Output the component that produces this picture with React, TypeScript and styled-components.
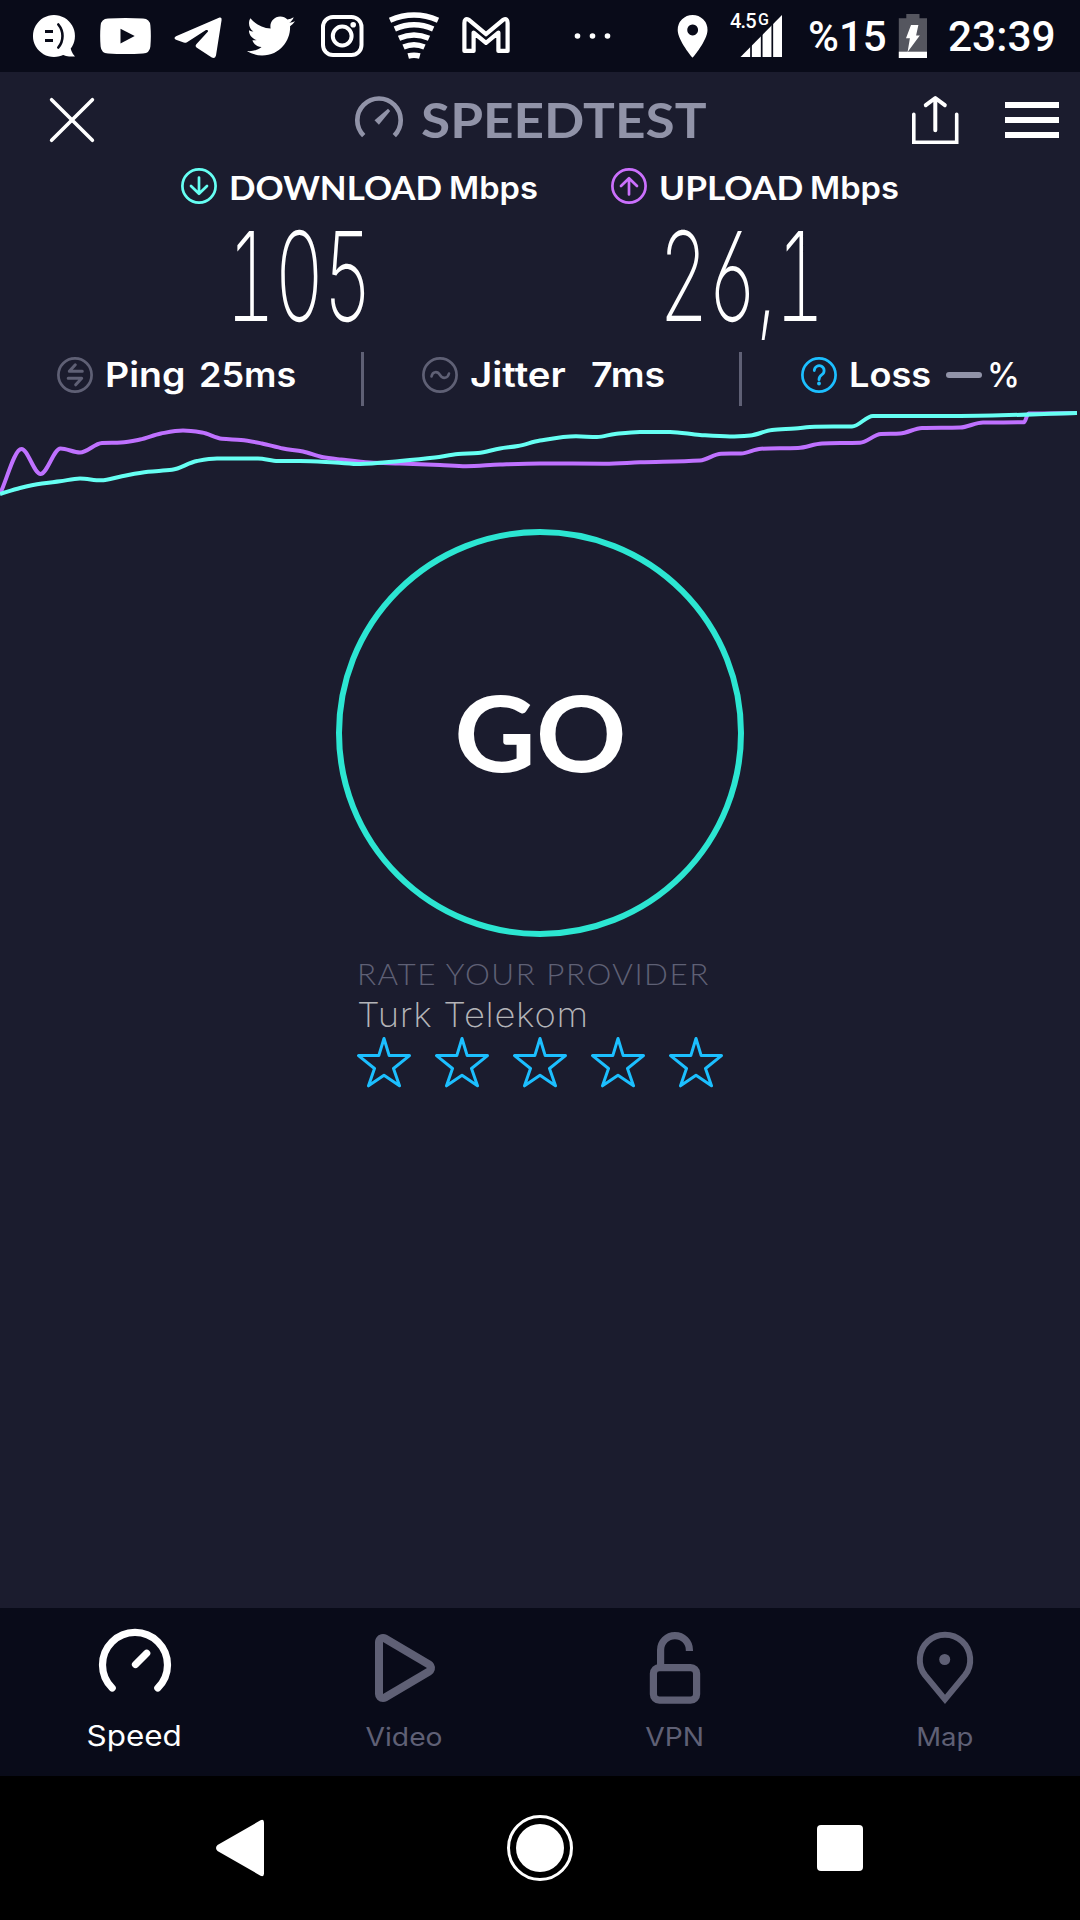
import React from "react";
import styled, { createGlobalStyle } from "styled-components";
import { FaTwitter } from "react-icons/fa";

const color = {
  page: "#1b1c2e",
  bar: "#090b19",
  white: "#ffffff",
  muted: "#9193a8",
  dim: "#5f6075",
  cyan: "#66fff3",
  teal: "#2ce6d2",
  violet: "#bf71ff",
  blue: "#1cbfff",
};

const GlobalStyle = createGlobalStyle`
  * { box-sizing: border-box; }
  body { margin: 0; background: ${color.page}; }
  svg { display: block; flex: none; }
`;

const Screen = styled.div`
  width: 1080px;
  height: 1920px;
  display: flex;
  flex-direction: column;
  background: ${color.page};
  color: ${color.white};
  font-family: Inter, "Liberation Sans", sans-serif;
  overflow: hidden;
`;

/* One piece of text: $w is the room it takes, $sx widens or condenses its letters. */
const Word = styled.span<{
  $size: number;
  $w: number;
  $sx?: number;
  $ml?: number;
  $weight?: number;
  $track?: number;
  $lh?: number;
  $face?: "Inter" | "Lato" | "Roboto";
  $tone?: string;
}>`
  display: block;
  flex: none;
  width: ${(p) => p.$w}px;
  margin-left: ${(p) => p.$ml ?? 0}px;
  font-family: ${(p) => p.$face ?? "Inter"}, "Liberation Sans", sans-serif;
  font-size: ${(p) => p.$size}px;
  font-weight: ${(p) => p.$weight ?? 600};
  line-height: ${(p) => p.$lh ?? 36}px;
  letter-spacing: ${(p) => p.$track ?? 0}px;
  color: ${(p) => p.$tone ?? color.white};
  white-space: nowrap;
  transform: scaleX(${(p) => p.$sx ?? 1});
  transform-origin: 0 50%;
`;

const Glyph = styled.svg<{ $w: number; $h: number; $ml?: number }>`
  width: ${(p) => p.$w}px;
  height: ${(p) => p.$h}px;
  margin-left: ${(p) => p.$ml ?? 0}px;
  fill: none;
  stroke-linecap: round;
  stroke-linejoin: round;
`;

/* ---------- status bar ---------- */

const StatusBar = styled.header`
  height: 72px;
  flex: none;
  display: flex;
  align-items: flex-start;
  padding: 12px 0 0 32px;
  background: ${color.bar};
`;

const Bird = styled(FaTwitter)`
  width: 48px;
  height: 48px;
  margin-left: 24px;
`;

const Network = styled.div`
  width: 54px;
  height: 48px;
  margin-left: 21px;
  position: relative;
`;

const NetworkType = styled.span`
  position: absolute;
  left: 0;
  top: -1px;
  font: 500 20px/20px Roboto, sans-serif;
  letter-spacing: -0.8px;
  white-space: nowrap;
  sup {
    font-size: 16px;
    line-height: 0;
    vertical-align: 3px;
    margin-left: 2px;
  }
`;

function Status() {
  return (
    <StatusBar>
      <Glyph $w={44} $h={48} viewBox="32 12 44 48">
        <path d="M54 15a21 21 0 1 1-.1 0zM70 44q.5 8 5 12.500-9 .5-14-2.500z" fill="#fff" />
        <path d="M45 31.500h8M45 40.500h8" stroke={color.bar} strokeWidth="3" strokeLinecap="butt" />
        <path d="M58.300 24.500q4.200 5 4.200 11.500t-4.200 11.500" stroke={color.bar} strokeWidth="2.600" />
      </Glyph>
      <Glyph $w={52} $h={48} $ml={24} viewBox="100 12 52 48">
        <path
          d="M108 18.600q17.500-1.200 35 0 6.800.4 7.400 7 .9 10.400 0 20.800-.6 6.600-7.400 7-17.500 1.200-35 0-6.800-.4-7.400-7-.9-10.400 0-20.800.6-6.600 7.400-7z"
          fill="#fff"
        />
        <path d="M120.500 28.800v14.600l14.200-7.300z" fill={color.bar} />
      </Glyph>
      <Glyph $w={50} $h={48} $ml={21} viewBox="173 12 50 48">
        <path
          d="M176 36.200L219.500 17.600Q222 16.800 221.600 20L216 55.500Q215 59 211.800 57.600L196.500 47.600Q194.600 46 196.300 44.200L208 31.400Q208.300 29.600 206 30L187 42.200Q185.500 43 183.700 42.600L176 39.800Q173 38 176 36.200Z"
          fill="#fff"
        />
      </Glyph>
      <Bird />
      <Glyph $w={44} $h={48} $ml={25} viewBox="320 12 44 48">
        <rect x="323" y="17" width="38.500" height="38" rx="10" stroke="#fff" strokeWidth="4" />
        <circle cx="342.200" cy="36" r="9.400" stroke="#fff" strokeWidth="4" />
        <circle cx="353.200" cy="24.800" r="2.800" fill="#fff" />
      </Glyph>
      <Glyph $w={52} $h={48} $ml={24} viewBox="388 12 52 48" stroke="#fff" strokeWidth="5.500">
        <g strokeLinecap="butt">
          <path d="M390 20.200Q414 9.800 438 20.200" />
          <path d="M394.800 29Q414 20.600 433.200 29" />
          <path d="M399 38.200Q414 31.600 429 38.200" />
          <path d="M403.500 47Q414 42.400 424.500 47" />
          <path d="M408.200 56Q414 54.400 419.800 56" />
        </g>
      </Glyph>
      <Glyph $w={50} $h={48} $ml={21} viewBox="461 12 50 48">
        <path
          d="M464.400 50.900V23q0-5 4.200-3.400L486 34.200l17.400-14.600q4.200-1.600 4.200 3.400v27.900h-9.200V32.600L486 42.900l-12.400-10.300v18.300z"
          stroke="#fff"
          strokeWidth="4.200"
        />
      </Glyph>
      <Glyph $w={40} $h={48} $ml={62} viewBox="573 12 40 48">
        <g fill="#fff">
          <circle cx="577.500" cy="36" r="2.800" />
          <circle cx="592.500" cy="36" r="2.800" />
          <circle cx="607.500" cy="36" r="2.800" />
        </g>
      </Glyph>
      <Glyph $w={32} $h={48} $ml={64} viewBox="677 12 32 48">
        <path
          d="M692.600 15a14.900 14.900 0 0 1 14.900 14.900c0 10.500-14.900 27.800-14.900 27.800s-14.900-17.300-14.900-27.800a14.900 14.900 0 0 1 14.900-14.900zm0 9.600a5.400 5.400 0 1 0 .1 0z"
          fill="#fff"
          fillRule="evenodd"
        />
      </Glyph>
      <Network>
        <Glyph $w={54} $h={48} viewBox="730 12 54 48">
          <path d="M740.500 57L782 15V57z" fill="#fff" />
          <path d="M751 14v44M761.700 14v44M772.300 14v44" stroke={color.bar} strokeWidth="1.700" />
        </Glyph>
        <NetworkType>
          4.5<sup>G</sup>
        </NetworkType>
      </Network>
      <Word $face="Roboto" $weight={500} $size={42} $w={89} $ml={24} $lh={50}>
        %15
      </Word>
      <Glyph $w={30} $h={48} $ml={1} viewBox="898 12 30 48">
        <path d="M906.300 14h13.200v4.300h7.500V58h-28.200V18.300h7.500z" fill="#55565f" />
        <path d="M898.800 51.700H927V58h-28.200z" fill="#fff" />
        <path d="M911 25h7.400l-2.300 10.500h3.700L907.600 52l2.300-13.700H906z" fill="#fff" />
      </Glyph>
      <Word $face="Roboto" $weight={500} $size={42} $sx={1.01} $w={106} $ml={20} $lh={50}>
        23:39
      </Word>
    </StatusBar>
  );
}

/* ---------- title bar ---------- */

const TitleBar = styled.div`
  height: 96px;
  flex: none;
  display: flex;
  align-items: center;
  padding-left: 48px;
`;

const Menu = styled.div`
  width: 54px;
  margin-left: 45px;
  display: flex;
  flex-direction: column;
  gap: 9px;
`;

const MenuLine = styled.i`
  height: 6px;
  background: ${color.white};
`;

function Title() {
  return (
    <TitleBar>
      <Glyph $w={48} $h={48} viewBox="48 96 48 48">
        <path d="M51.600 99.700L92.400 140.300M92.400 99.700L51.600 140.300" stroke="#fff" strokeWidth="3.600" />
      </Glyph>
      <Glyph $w={50} $h={50} $ml={258} viewBox="354 95 50 50">
        <path d="M363.700 135.600A21.700 21.700 0 1 1 394.300 135.600" stroke={color.muted} strokeWidth="4.700" strokeLinecap="butt" />
        <path d="M388 108.700l2.200 2.300-11.300 13.700-4.400-4.400z" fill={color.muted} />
      </Glyph>
      <Word $face="Lato" $weight={700} $size={47} $sx={1.13} $w={286} $ml={17} $lh={48} $tone={color.muted}>
        SPEEDTEST
      </Word>
      <Glyph $w={50} $h={50} $ml={203} viewBox="910 95 50 50">
        <path d="M913.800 114.200V142.300H956.700V114.200" stroke="#fff" strokeWidth="3.600" strokeLinejoin="miter" />
        <path d="M935.300 130.200V98.500M925.800 105.200L935.300 98L944.800 105.200" stroke="#fff" strokeWidth="4" />
      </Glyph>
      <Menu>
        <MenuLine />
        <MenuLine />
        <MenuLine />
      </Menu>
    </TitleBar>
  );
}

/* ---------- results ---------- */

const Results = styled.section`
  height: 184px;
  flex: none;
  display: grid;
  grid-template-columns: 430px 1fr;
  padding-left: 181px;
`;

const ResultHead = styled.div`
  display: flex;
  height: 41px;
  align-items: flex-start;
`;

const Units = styled.div`
  display: flex;
  padding-top: 2px;
`;

/* Tabular figures bring the 1 with a foot; ss01 brings the 6 with a straight stem. */
const Value = styled.div<{ $ml: number }>`
  margin-left: ${(p) => p.$ml}px;
  padding-top: 5px;
  font-feature-settings: "tnum", "ss01";
`;

const Arrow = ({ up }: { up?: boolean }) => (
  <Glyph $w={36} $h={36} viewBox="0 0 36 36">
    <g stroke={up ? "#cb70fd" : color.cyan} strokeWidth="2.700">
      <circle cx="18" cy="18" r="16.600" />
      <path d={up ? "M18 26.500V10.500M10 18L18 10.200L26 18" : "M18 9.500V25.500M10 18L18 25.800L26 18"} />
    </g>
  </Glyph>
);

/* ---------- latency row ---------- */

const Stats = styled.section`
  height: 54px;
  flex: none;
  display: flex;
  align-items: flex-start;
  padding-left: 57px;
`;

const StatItem = styled.div<{ $w: number }>`
  width: ${(p) => p.$w}px;
  height: 45px;
  flex: none;
  display: flex;
  align-items: center;
`;

const Divider = styled.i<{ $gap: number }>`
  width: 3px;
  height: 54px;
  flex: none;
  margin-right: ${(p) => p.$gap}px;
  background: ${color.dim};
`;

const Dash = styled.i`
  width: 36px;
  height: 6px;
  border-radius: 3px;
  background: ${color.muted};
`;

function Latency() {
  return (
    <Stats>
      <StatItem $w={304}>
        <Glyph $w={36} $h={36} viewBox="57 356 36 36" stroke={color.dim}>
          <circle cx="75" cy="374" r="16.600" strokeWidth="2.700" />
          <path d="M82.300 370.300H69.300L75.300 363.800M68.200 377.300H81.700L75.700 383.800" strokeWidth="3" />
        </Glyph>
        <Word $size={34.400} $sx={1.09} $w={93.600} $ml={12.200}>Ping</Word>
        <Word $size={34.400} $sx={1.047} $w={96} $ml={0.400}>25ms</Word>
      </StatItem>
      <Divider $gap={58} />
      <StatItem $w={317}>
        <Glyph $w={36} $h={36} viewBox="422 356 36 36" stroke={color.dim}>
          <circle cx="440" cy="374" r="16.600" strokeWidth="2.700" />
          <path d="M431.500 375.500C432.500 370 437.500 370 440 374S447.500 378 449 372.500" strokeWidth="2.600" />
        </Glyph>
        <Word $size={34.400} $sx={1.116} $w={121} $ml={11.900}>Jitter</Word>
        <Word $size={34.400} $sx={1.093} $w={75}>7ms</Word>
      </StatItem>
      <Divider $gap={59} />
      <StatItem $w={250}>
        <Glyph $w={36} $h={36} viewBox="801 356 36 36" stroke={color.blue}>
          <circle cx="819" cy="374" r="16.600" strokeWidth="2.700" />
          <path d="M814.300 369.500a4.900 4.900 0 1 1 7.600 4.200q-2.900 1.900-2.900 5" strokeWidth="2.800" />
          <circle cx="819" cy="382.500" r="1.900" fill={color.blue} stroke="none" />
        </Glyph>
        <Word $size={34.400} $sx={1.05} $w={97} $ml={12}>Loss</Word>
        <Dash />
        <Word $size={34.400} $sx={0.965} $w={34} $ml={4.700} $weight={500}>%</Word>
      </StatItem>
    </Stats>
  );
}

/* ---------- history chart ---------- */

type Point = [number, number];

const uploadTrace: Point[] = [
  [0, 494], [21.500, 449], [40.500, 474], [60.500, 448.500], [80, 452.500], [102, 443], [121, 442.500], [140, 439.500], [161, 433.500],
  [183, 430.500], [202, 432.500], [222, 438.700], [241, 440], [262, 443.500], [283, 448.500], [303, 451.500], [322, 457], [341, 459.500],
  [370, 462.500], [400, 463.500], [440, 465], [466, 466.200], [500, 464.500], [540, 463.500], [605, 463.700], [640, 462.300], [700, 460.500],
  [721, 453.700], [741, 453.500], [761, 448.700], [798, 448], [822, 443.500], [860, 442.700], [881, 434], [900, 433.500], [922, 428],
  [960, 427.500], [983, 422.500], [1024, 422.300], [1028.500, 413.500], [1077, 413],
];
const downloadTrace: Point[] = [
  [0, 494], [20, 488], [42, 483.500], [60, 481.300], [80, 478.500], [101, 480.300], [122, 476.200], [148, 471.800], [172, 469.800],
  [197, 461], [217, 458.500], [258, 458.500], [278, 461], [300, 461], [335, 462.500], [360, 464], [400, 461], [435, 457.500], [458, 454],
  [478, 453], [500, 448.500], [518, 446], [540, 440.500], [576, 436.300], [597, 437], [615, 434], [640, 432], [670, 432], [700, 435],
  [730, 436.500], [750, 435.500], [772, 430], [795, 428.500], [815, 426.700], [852, 426.500], [873, 416], [892, 416], [960, 416],
  [1077, 413],
];

/* Joins the samples with curves that never overshoot a sample. */
function smooth(points: Point[]) {
  const slope = (a: number) => {
    if (a <= 0 || a >= points.length - 1) return null;
    const m0 = (points[a][1] - points[a - 1][1]) / (points[a][0] - points[a - 1][0]);
    const m1 = (points[a + 1][1] - points[a][1]) / (points[a + 1][0] - points[a][0]);
    return m0 * m1 <= 0 ? 0 : (2 * m0 * m1) / (m0 + m1);
  };
  return points.reduce((d, [x, y], i) => {
    if (i === 0) return `M${x} ${y}`;
    const [px, py] = points[i - 1];
    const line = (y - py) / (x - px);
    const s0 = slope(i - 1) ?? line;
    const s1 = slope(i) ?? line;
    const h = (x - px) / 3;
    return `${d}C${px + h} ${py + s0 * h} ${x - h} ${y - s1 * h} ${x} ${y}`;
  }, "");
}

/* ---------- go button, rating ---------- */

const GoButton = styled.button`
  width: 408px;
  height: 408px;
  flex: none;
  align-self: center;
  margin: 29px 0 0;
  padding: 0 0 5px 108px;
  display: flex;
  align-items: center;
  border: 6px solid ${color.teal};
  border-radius: 50%;
  background: none;
`;

const Rating = styled.section`
  flex: 1;
  padding: 17px 0 0 357px;
`;

const Stars = styled.div`
  display: flex;
  gap: 24px;
`;

/* ---------- bottom tabs ---------- */

const Tabs = styled.nav`
  height: 168px;
  flex: none;
  display: grid;
  grid-template-columns: repeat(4, 1fr);
  background: ${color.bar};
`;

const Tab = styled.div<{ $active?: boolean }>`
  display: flex;
  flex-direction: column;
  align-items: center;
  padding-top: 18px;
  color: ${(p) => (p.$active ? color.white : color.dim)};
  stroke: currentColor;
`;

const TabLabel = styled.span<{ $active?: boolean; $sx: number }>`
  margin: ${(p) => (p.$active ? 12 : 13)}px 1px 0 0;
  font-size: ${(p) => (p.$active ? 27.800 : 25.700)}px;
  font-weight: 400;
  line-height: 36px;
  stroke: none;
  transform: scaleX(${(p) => p.$sx});
`;

/* ---------- system navigation ---------- */

const SystemNav = styled.footer`
  height: 144px;
  flex: none;
  display: flex;
  align-items: center;
  justify-content: space-between;
  padding: 0 216px;
  background: #000;
`;

const Home = styled.i`
  width: 66px;
  height: 66px;
  margin-right: 2px;
  padding: 6px;
  border: 3px solid #fff;
  border-radius: 50%;
  background: #fff content-box;
  background-clip: content-box;
`;

const Recents = styled.i`
  width: 46px;
  height: 46px;
  margin-right: 1px;
  border-radius: 4px;
  background: #fff;
`;

export default function App() {
  return (
    <Screen>
      <GlobalStyle />
      <Status />
      <Title />
      <Results>
        <div>
          <ResultHead>
            <Arrow />
            <Units>
              <Word $face="Lato" $weight={700} $size={31.600} $sx={1.104} $w={220.400} $ml={11.900}>DOWNLOAD</Word>
              <Word $size={31.200} $sx={1.048} $w={90}>Mbps</Word>
            </Units>
          </ResultHead>
          <Value $ml={44.500}>
            <Word $weight={230} $size={124} $sx={0.62} $track={-2} $w={150} $lh={124}>105</Word>
          </Value>
        </div>
        <div>
          <ResultHead>
            <Arrow up />
            <Units>
              <Word $face="Lato" $weight={700} $size={31.600} $sx={1.114} $w={151.500} $ml={11.500}>UPLOAD</Word>
              <Word $size={31.200} $sx={1.048} $w={90}>Mbps</Word>
            </Units>
          </ResultHead>
          <Value $ml={47.500}>
            <Word $weight={230} $size={124} $sx={0.62} $track={-2} $w={160} $lh={124}>26,1</Word>
          </Value>
        </div>
      </Results>
      <Latency />
      <Glyph $w={1080} $h={94} viewBox="0 406 1080 94" strokeWidth="4">
        <g strokeLinecap="butt">
          <path d={smooth(uploadTrace)} stroke={color.violet} />
          <path d={smooth(downloadTrace)} stroke={color.cyan} />
        </g>
      </Glyph>
      <GoButton>
        <Word $face="Lato" $weight={700} $size={105.600} $sx={1.064} $w={170} $lh={120}>GO</Word>
      </GoButton>
      <Rating>
        <Word $face="Lato" $weight={300} $size={29} $sx={1.083} $track={1.400} $w={352} $lh={40} $tone={color.dim}>
          RATE YOUR PROVIDER
        </Word>
        <Word $weight={250} $size={34} $sx={1.07} $track={0.650} $w={352} $lh={42} $tone="#b4b4b8">
          Turk Telekom
        </Word>
        <Stars>
          {[1, 2, 3, 4, 5].map((n) => (
            <Glyph key={n} $w={54} $h={52} viewBox="357 1037 54 52">
              <path
                d="M384 1039.500L389.200 1056.600H409.500L393.500 1069.500L399.500 1086.800L384 1076.300L368.500 1086.800L374.500 1069.500L358.500 1056.600H378.800Z"
                stroke={color.blue}
                strokeWidth="3"
              />
            </Glyph>
          ))}
        </Stars>
      </Rating>
      <Tabs>
        <Tab $active>
          <Glyph $w={80} $h={80} viewBox="95 1626 80 80" strokeWidth="7.200">
            <path d="M112.200 1688A32.500 32.500 0 1 1 157.800 1688" />
            <path d="M135.500 1664.500L146.700 1653.300" />
          </Glyph>
          <TabLabel $active $sx={1.13}>Speed</TabLabel>
        </Tab>
        <Tab>
          <Glyph $w={80} $h={80} viewBox="365 1626 80 80">
            <path d="M383 1642V1694L427 1668Z" fill={color.bar} strokeWidth="16" paintOrder="stroke" />
          </Glyph>
          <TabLabel $sx={1.1}>Video</TabLabel>
        </Tab>
        <Tab>
          <Glyph $w={80} $h={80} viewBox="635 1626 80 80" strokeWidth="7.200">
            <rect x="653.400" y="1667.600" width="43.200" height="32.600" rx="6" />
            <path d="M660.600 1666V1650A14.400 14.400 0 0 1 689.400 1650V1651" strokeLinecap="butt" />
          </Glyph>
          <TabLabel $sx={1.1}>VPN</TabLabel>
        </Tab>
        <Tab>
          <Glyph $w={80} $h={80} viewBox="905 1626 80 80" strokeWidth="6">
            <path d="M945 1699.300L925 1675.200A25.200 25.200 0 1 1 965 1675.200Z" strokeLinejoin="miter" />
            <circle cx="944.700" cy="1659.500" r="5.500" fill="currentColor" stroke="none" />
          </Glyph>
          <TabLabel $sx={1.07}>Map</TabLabel>
        </Tab>
      </Tabs>
      <SystemNav>
        <Glyph $w={48} $h={58} viewBox="216 1819 48 58">
          <path d="M260.500 1820.300Q264 1818.800 264 1822.500V1873.500Q264 1877.200 260.500 1875.700L217.500 1851Q214.500 1848 217.500 1845Z" fill="#fff" />
        </Glyph>
        <Home />
        <Recents />
      </SystemNav>
    </Screen>
  );
}
